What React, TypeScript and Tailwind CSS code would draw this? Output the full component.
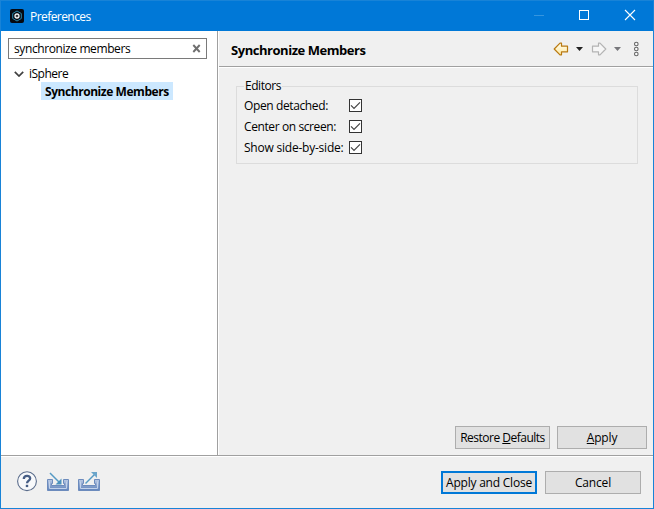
import type { ReactNode } from "react";

function TitleBar() {
  return (
    <header className="flex h-[30px] shrink-0 items-center bg-[#0078d7] pl-[9px] text-white">
      <svg width="14" height="14" viewBox="0 0 14 14">
        <rect width="14" height="14" rx="2" fill="#05080f" />
        <path d="M7 2 11.300 4.500v5L7 12 2.700 9.500v-5z" fill="none" stroke="#2b86a8" strokeWidth="1" />
        <circle cx="7" cy="7" r="2" fill="#05070a" stroke="#f3f6f8" strokeWidth="1.3" />
        <circle cx="7" cy="7" r=".6" fill="#fff" />
      </svg>
      <span className="ml-[6px] pt-px tracking-[-0.56px]">Preferences</span>
      <svg className="ml-auto" width="120" height="30" viewBox="0 0 120 30" fill="none" shapeRendering="crispEdges">
        <path d="M1 14.500h10" stroke="#3595df" />
        <rect x="46.500" y="9.500" width="9" height="9" stroke="#fff" />
        <path d="m92 9 10 10m0-10L92 19" stroke="#fff" strokeWidth="1.1" shapeRendering="auto" />
      </svg>
    </header>
  );
}

function Sidebar() {
  return (
    <aside className="w-[217px] shrink-0 border-r border-[#a0a0a0] bg-white pl-[7px] pt-[7px]">
      <div className="flex h-[21px] w-[199px] items-center justify-between border border-[#7a7a7a] pl-[5px] pr-[5px]">
        <span className="tracking-[-0.4px]">synchronize members</span>
        <svg width="9" height="9" viewBox="0 0 9 9">
          <path d="m1.300 1 6.400 7m0-7L1.300 8" stroke="#6f6f6f" strokeWidth="1.9" />
        </svg>
      </div>
      <div className="mt-[5px] flex h-[18px] items-center pl-[6px]">
        <svg className="mt-[2px]" width="10" height="6" viewBox="0 0 10 6" fill="none">
          <path d="m.8 .8 4.200 4.200L9.200 .8" stroke="#404040" strokeWidth="1.700" />
        </svg>
        <span className="ml-[5px] pt-px tracking-[-0.5px]">iSphere</span>
      </div>
      <div className="ml-[33px] flex h-[18px] w-[132px] items-center bg-[#cce8ff] pl-1 font-bold">
        <span className="pt-px tracking-[-0.44px]">Synchronize Members</span>
      </div>
    </aside>
  );
}

function NavIcons() {
  return (
    <svg width="88" height="16" viewBox="0 0 88 16">
      <defs>
        <linearGradient id="gold" x2="0" y2="1">
          <stop stopColor="#fffdf0" />
          <stop offset="1" stopColor="#ffe9a0" />
        </linearGradient>
      </defs>
      <path d="M1.200 8 7 2.200h1.500v3H14.500v5.600h-6v3H7z" fill="url(#gold)" stroke="#b97910" strokeWidth="1.2" strokeLinejoin="round" />
      <path d="M23 6h7l-3.500 4z" fill="#222" />
      <path d="M52.800 8 47 2.200h-1.500v3h-6v5.600h6v3H47z" fill="#f6f6f6" stroke="#b3b3b3" strokeWidth="1.2" strokeLinejoin="round" />
      <path d="M61 6h7l-3.500 4z" fill="#77777b" />
      <g fill="#fafafa" stroke="#666" strokeWidth="1.100">
        <circle cx="83.300" cy="3" r="1.800" />
        <circle cx="83.300" cy="8" r="1.800" />
        <circle cx="83.300" cy="13" r="1.800" />
      </g>
    </svg>
  );
}

function Check() {
  return (
    <svg width="13" height="13" viewBox="0 0 13 13" fill="none">
      <rect x=".5" y=".5" width="12" height="12" fill="#fff" stroke="#333" />
      <path d="m2 6.300 3 3 6-6" stroke="#444" strokeWidth="1.2" />
    </svg>
  );
}

function Option({ children }: { children: ReactNode }) {
  return (
    <div className="flex h-[21px] items-center">
      <span className="w-[105px] whitespace-nowrap">{children}</span>
      <Check />
    </div>
  );
}

function Tray() {
  return (
    <>
      <path d="M.500 9.500h5v4h-1v2h13v-2h-1v-4h5v11H.500z" fill="url(#tray)" stroke="#6c8bbd" />
      <path d="M2.500 11.500v7h17v-7" stroke="#c3d2ea" />
    </>
  );
}

function FooterIcons() {
  return (
    <svg width="86" height="25" viewBox="0 0 86 25" fill="none">
      <defs>
        <linearGradient id="tray" x2="0" y2="1">
          <stop stopColor="#b9c9e4" />
          <stop offset="1" stopColor="#5f82ba" />
        </linearGradient>
      </defs>
      <circle cx="11" cy="11.200" r="9.400" fill="#f8f9fb" stroke="#5b6d8c" strokeWidth="1.1" />
      <path d="M7.800 9c0-4 6.400-4 6.400-.7 0 2.400-3.200 2.300-3.200 5" stroke="#465d85" strokeWidth="2.300" />
      <rect x="9.800" y="14.800" width="2.400" height="2.300" fill="#465d85" />
      <g transform="translate(31 0)">
        <Tray />
        <path d="m3 3 9 9" stroke="#5599c4" strokeWidth="1.500" />
        <path d="M14.500 8.500v6h-6z" fill="#4b91bd" />
      </g>
      <g transform="translate(62 0)">
        <Tray />
        <path d="m7.500 13.500 9-9" stroke="#5599c4" strokeWidth="1.500" />
        <path d="M13 2h6v6z" fill="#6ba5ca" />
      </g>
    </svg>
  );
}

export default function App() {
  return (
    <div className="flex h-[509px] w-[654px] flex-col overflow-hidden border border-[#1883d7] bg-[#f0f0f0] font-['Open_Sans','Noto_Sans',sans-serif] text-[12px] leading-[18px] text-black">
      <TitleBar />
      <div className="flex h-[425px] shrink-0 border-b border-[#a0a0a0]">
        <Sidebar />
        <main className="flex min-w-0 flex-1 flex-col border-l border-white">
          <div className="flex h-[36px] shrink-0 items-center justify-between border-b border-[#a0a0a0] pl-[12px] pr-[12px]">
            <h1 className="pt-[3px] text-[13px] font-bold tracking-[-0.46px]">Synchronize Members</h1>
            <NavIcons />
          </div>
          <div className="flex flex-1 flex-col border-t border-white pl-[17px]">
            <fieldset className="mt-[9px] h-[87px] w-[402px] border border-[#dcdcdc] pl-[7px]">
              <legend className="h-[18px] px-[1px] tracking-[-0.45px]">Editors</legend>
              <Option><span className="tracking-[-0.38px]">Open detached:</span></Option>
              <Option><span className="tracking-[-0.4px]">Center on screen:</span></Option>
              <Option><span className="tracking-[-0.22px]">Show side-by-side:</span></Option>
            </fieldset>
            <div className="mb-[6px] mr-[6px] mt-auto flex justify-end gap-[7px]">
              <button className="h-[23px] w-[95px] whitespace-nowrap border border-[#adadad] bg-[#e1e1e1] tracking-[-0.5px]">Restore <u>D</u>efaults</button>
              <button className="h-[23px] w-[90px] border border-[#adadad] bg-[#e1e1e1] tracking-[-0.16px]"><u>A</u>pply</button>
            </div>
          </div>
        </main>
      </div>
      <footer className="flex flex-1 items-center justify-between border-t border-white pl-[15px] pr-[12px]">
        <FooterIcons />
        <div className="flex gap-2">
          <button className="h-[23px] w-[96px] whitespace-nowrap border-2 border-[#0078d7] bg-[#e1e1e1] tracking-[-0.22px]">Apply and Close</button>
          <button className="h-[23px] w-[96px] border border-[#adadad] bg-[#e1e1e1] tracking-[-0.16px]">Cancel</button>
        </div>
      </footer>
    </div>
  );
}
